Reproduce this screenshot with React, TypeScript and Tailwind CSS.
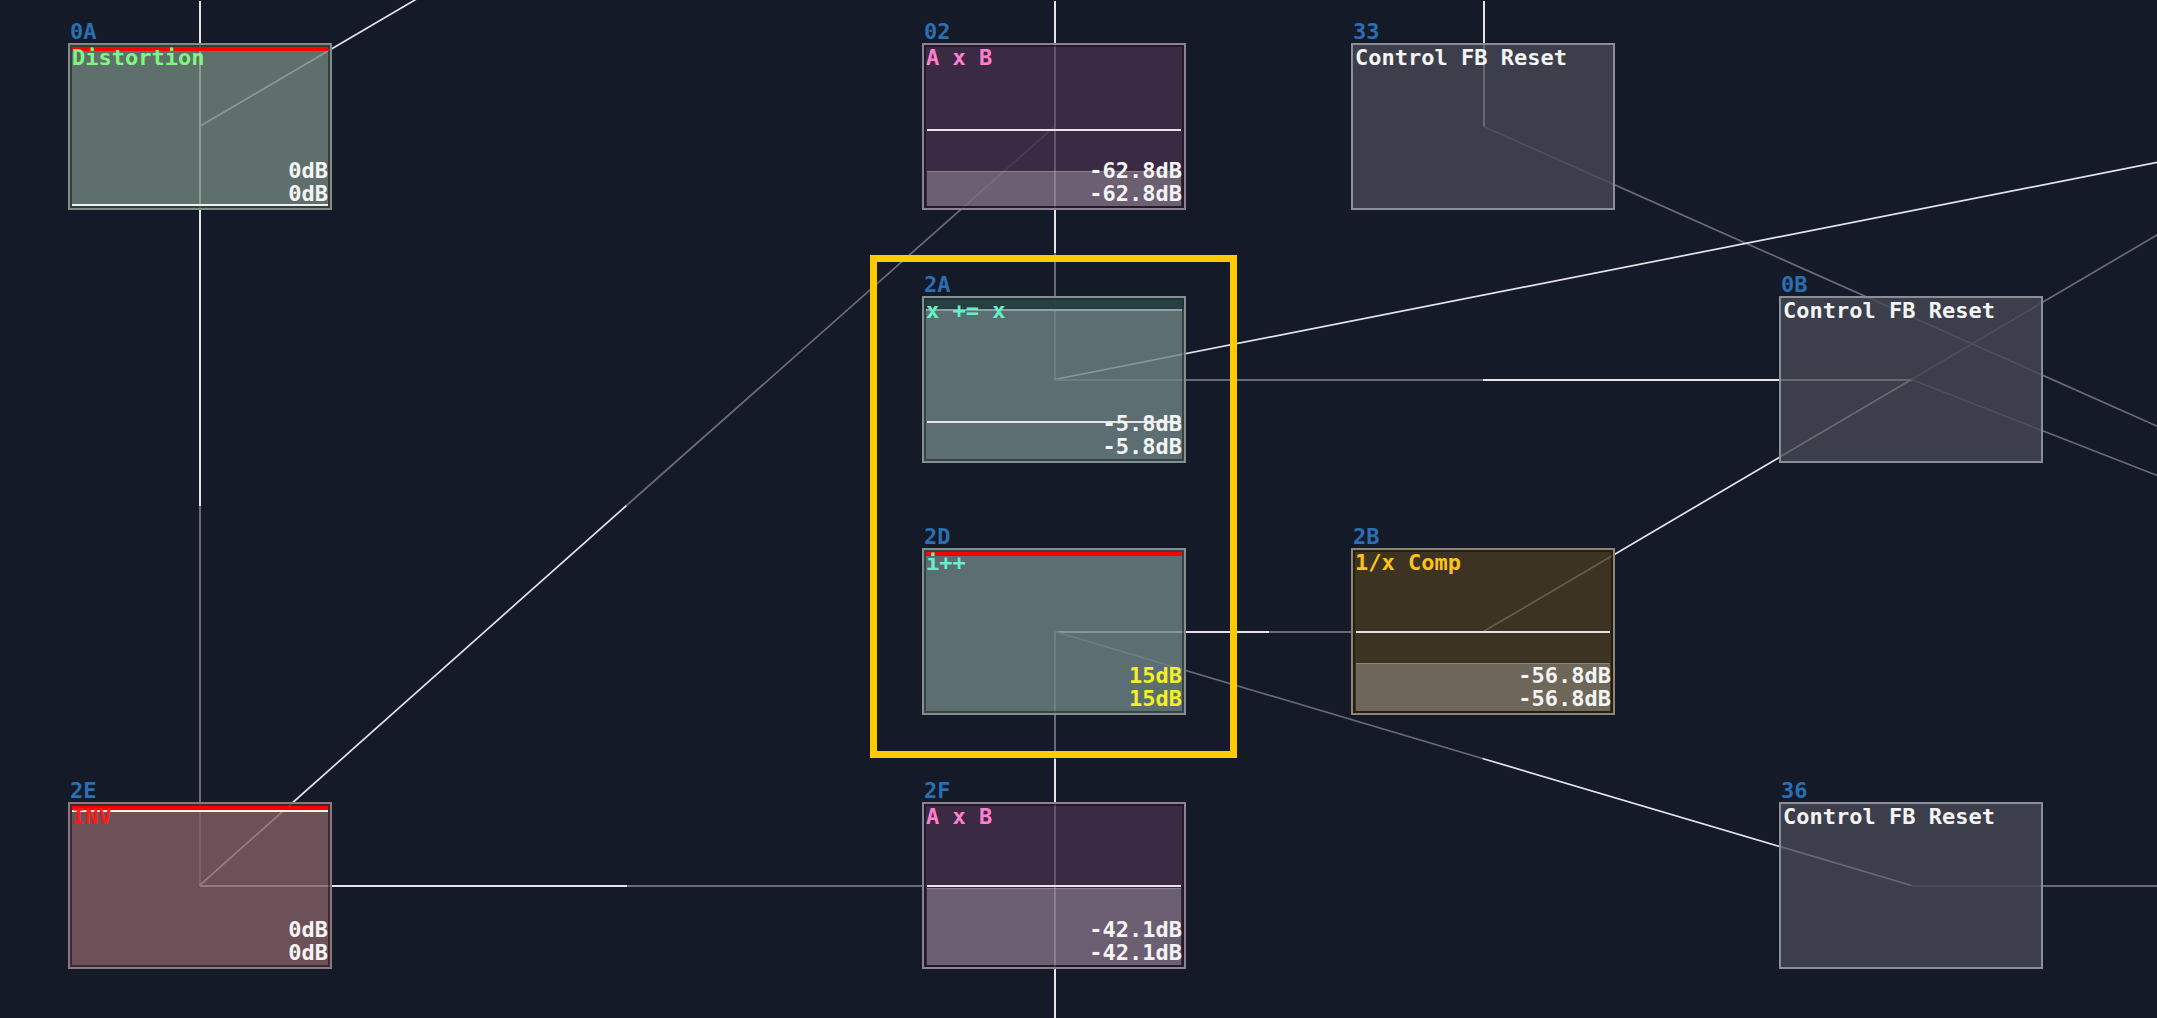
import React from 'react';

type Tone = 'green' | 'purple' | 'gray' | 'teal' | 'olive' | 'rose';

type Mod = {
    id: string;
    title: string;
    col: number;
    row: number;
    tone: Tone;
    titleColor: string;
    db?: string;
    dbColor?: string;
    redBar?: boolean;
    redLine?: boolean; // white line right under the red bar
    bottomLine?: boolean;
    band?: boolean;
    line?: number; // top offset of the white level line
    fill?: number; // top offset of the lighter level fill
};

// box colours (semi transparent, links show through)
const TONE: Record<Tone, string> = {
    green: 'bg-[rgba(114,134,125,0.8)] border-[#7f8b88] shadow-[inset_0_0_0_2px_rgba(0,0,0,0.45)]',
    purple: 'bg-[rgba(69,46,74,0.8)] border-[#8c8292] shadow-[inset_0_0_0_2px_rgba(0,0,0,0.4)]',
    gray: 'bg-[rgba(70,72,84,0.8)] border-[#8b8e97]',
    teal: 'bg-[rgba(110,131,133,0.8)] border-[#83908f] shadow-[inset_0_0_0_2px_rgba(0,0,0,0.4)]',
    olive: 'bg-[rgba(70,57,33,0.8)] border-[#8c8672] shadow-[inset_0_0_0_2px_rgba(0,0,0,0.4)]',
    rose: 'bg-[rgba(131,95,101,0.8)] border-[#8e7880] shadow-[inset_0_0_0_2px_rgba(0,0,0,0.45)]',
};

const COL_X = [68, 496, 922, 1351, 1779];
const ROW_Y = [43, 296, 548, 802];

const MODULES: Mod[] = [
    { id: '0A', title: 'Distortion', col: 0, row: 0, tone: 'green', titleColor: 'text-[#7ef77e]', db: '0dB', dbColor: 'text-[#f4f4f4]', redBar: true, bottomLine: true },
    { id: '02', title: 'A x B', col: 2, row: 0, tone: 'purple', titleColor: 'text-[#ff7fcf]', db: '-62.8dB', dbColor: 'text-[#f4f4f4]', line: 84, fill: 126 },
    { id: '33', title: 'Control FB Reset', col: 3, row: 0, tone: 'gray', titleColor: 'text-[#f4f4f4]' },
    { id: '2A', title: 'x += x', col: 2, row: 1, tone: 'teal', titleColor: 'text-[#66f0c6]', db: '-5.8dB', dbColor: 'text-[#f4f4f4]', band: true, line: 123 },
    { id: '0B', title: 'Control FB Reset', col: 4, row: 1, tone: 'gray', titleColor: 'text-[#f4f4f4]' },
    { id: '2D', title: 'i++', col: 2, row: 2, tone: 'teal', titleColor: 'text-[#66f0c6]', db: '15dB', dbColor: 'text-[#f2f224]', redBar: true },
    { id: '2B', title: '1/x Comp', col: 3, row: 2, tone: 'olive', titleColor: 'text-[#ffc21a]', db: '-56.8dB', dbColor: 'text-[#f4f4f4]', line: 81, fill: 113 },
    { id: '2E', title: 'INV', col: 0, row: 3, tone: 'rose', titleColor: 'text-[#ff1a1a]', db: '0dB', dbColor: 'text-[#f4f4f4]', redBar: true, redLine: true },
    { id: '2F', title: 'A x B', col: 2, row: 3, tone: 'purple', titleColor: 'text-[#ff7fcf]', db: '-42.1dB', dbColor: 'text-[#f4f4f4]', line: 81, fill: 84 },
    { id: '36', title: 'Control FB Reset', col: 4, row: 3, tone: 'gray', titleColor: 'text-[#f4f4f4]' },
];

// links: x1, y1, x2, y2, bright half?
const LINKS: [number, number, number, number, boolean][] = [
    [199, 0, 199, 126, true],
    [199, 126, 199, 505, true],
    [199, 505, 199, 885, false],
    [199, 126, 628, -126, true],
    [1054, 0, 1054, 126, true],
    [1054, 126, 1054, 252, true],
    [1054, 252, 1054, 379, false],
    [1054, 631, 1054, 758, false],
    [1054, 758, 1054, 885, true],
    [1054, 885, 1054, 1018, true],
    [199, 885, 626, 505, true],
    [626, 505, 1054, 126, false],
    [1483, 0, 1483, 126, true],
    [1483, 126, 2400, 534, false],
    [1054, 379, 2400, 114, true],
    [1054, 379, 1482, 379, false],
    [1482, 379, 1911, 379, true],
    [1911, 379, 2400, 570, false],
    [1483, 631, 1911, 379, true],
    [1911, 379, 2339, 127, false],
    [1054, 631, 1268, 631, true],
    [1268, 631, 1483, 631, false],
    [1054, 631, 1482, 758, false],
    [1482, 758, 1911, 885, true],
    [1911, 885, 2157, 885, false],
    [199, 885, 626, 885, true],
    [626, 885, 1054, 885, false],
];

function Links() {
    return (
        <svg className="absolute inset-0 pointer-events-none" width={2157} height={1018} viewBox="0 0 2157 1018">
            {LINKS.map(([x1, y1, x2, y2, bright], i) => {
                const straight = x1 === x2 || y1 === y2;
                return (
                    <line
                        key={i}
                        x1={x1 + 0.5}
                        y1={y1 + 0.5}
                        x2={x2 + 0.5}
                        y2={y2 + 0.5}
                        stroke={bright ? '#e4e4e8' : '#666b77'}
                        strokeWidth={straight ? 2 : 1.7}
                        shapeRendering={straight ? 'crispEdges' : 'auto'}
                    />
                );
            })}
        </svg>
    );
}

function ModuleBox({ m }: { m: Mod }) {
    const left = COL_X[m.col];
    const top = ROW_Y[m.row] - 22;
    return (
        <div className="absolute flex flex-col" style={{ left, top }}>
            <div className="h-[22px] pl-[2px] text-[22px] leading-[22px] font-bold text-[#2b6fb3]">{m.id}</div>
            <div className={`relative w-[264px] h-[167px] border-2 flex flex-col justify-between px-[2px] pt-[2px] pb-[3px] ${TONE[m.tone]}`}>
                {m.band && (
                    <>
                        <div className="absolute left-0 right-0 top-0 h-[11px] bg-[rgba(22,48,52,0.75)]" />
                        <div className="absolute left-[2px] right-[2px] top-[11px] h-[2px] bg-[#8fa0a0]" />
                    </>
                )}
                {m.redBar && <div className="absolute left-[2px] right-[2px] top-[2px] h-[4px] bg-[#ff0000]" />}
                {m.redLine && <div className="absolute left-[2px] right-[2px] top-[6px] h-[2px] bg-[#f2f2f2]" />}
                {m.fill !== undefined && (
                    <div
                        className="absolute left-[3px] right-[3px] bottom-[2px] bg-[rgba(255,255,255,0.25)] border-t border-[rgba(255,255,255,0.2)]"
                        style={{ top: m.fill }}
                    />
                )}
                {m.line !== undefined && (
                    <div className="absolute left-[3px] right-[3px] h-[2px] bg-[#e8e4e8]" style={{ top: m.line }} />
                )}
                {m.bottomLine && <div className="absolute left-[2px] right-[2px] bottom-[2px] h-[2px] bg-[#eef2ee]" />}
                <div className={`relative text-[22px] leading-[22px] font-bold whitespace-pre ${m.titleColor}`}>{m.title}</div>
                {m.db && (
                    <div className={`relative text-right text-[22px] leading-[23px] font-bold ${m.dbColor}`}>
                        <div>{m.db}</div>
                        <div>{m.db}</div>
                    </div>
                )}
            </div>
        </div>
    );
}

export default function App() {
    return (
        <div className="relative w-[2157px] h-[1018px] overflow-hidden bg-[#141a28] font-['DejaVu_Sans_Mono',monospace]">
            <Links />
            {MODULES.map((m) => (
                <ModuleBox key={m.id} m={m} />
            ))}
            {/* selection frame */}
            <div className="absolute left-[870px] top-[255px] w-[367px] h-[503px] border-[7px] border-[#ffca00]" />
        </div>
    );
}
